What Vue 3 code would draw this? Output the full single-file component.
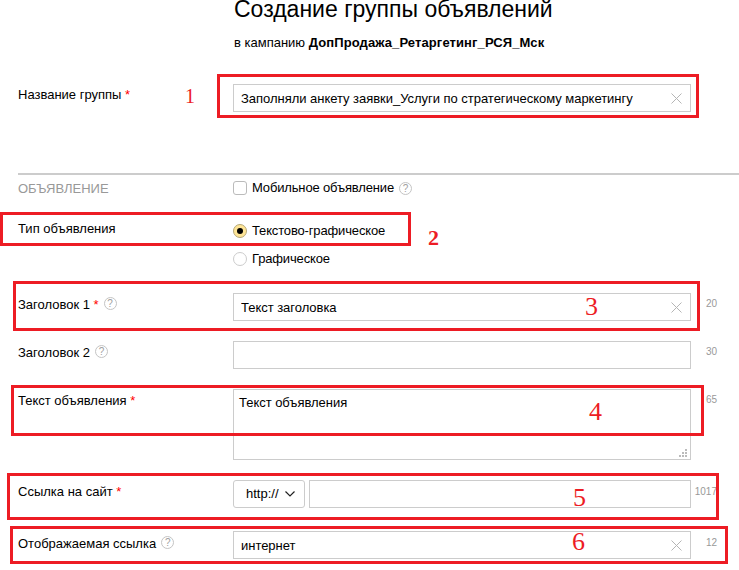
<template>
  <div class="page">
    <h1 class="title">Создание группы объявлений</h1>
    <p class="subtitle">в кампанию <b>ДопПродажа_Ретаргетинг_РСЯ_Мск</b></p>

    <div class="row row-name">
      <label class="label">Название группы <span class="req">*</span></label>
      <div class="field">
        <input class="input" value="Заполняли анкету заявки_Услуги по стратегическому маркетингу" readonly />
        <svg class="clear" viewBox="0 0 11 11"><path d="M0.5 0.5l10 10M10.5 0.5l-10 10" /></svg>
      </div>
    </div>

    <div class="divider"></div>

    <div class="row row-mobile">
      <div class="section">ОБЪЯВЛЕНИЕ</div>
      <div class="option">
        <span class="checkbox"></span>
        <span>Мобильное объявление</span>
        <span class="help">?</span>
      </div>
    </div>

    <div class="row row-type">
      <div class="label">Тип объявления</div>
      <div class="radios">
        <div class="option"><span class="radio checked"></span><span>Текстово-графическое</span></div>
        <div class="option"><span class="radio"></span><span>Графическое</span></div>
      </div>
    </div>

    <div class="row row-title1">
      <label class="label">Заголовок 1 <span class="req">*</span><span class="help">?</span></label>
      <div class="field">
        <input class="input" value="Текст заголовка" readonly />
        <svg class="clear" viewBox="0 0 11 11"><path d="M0.5 0.5l10 10M10.5 0.5l-10 10" /></svg>
      </div>
      <div class="counter">20</div>
    </div>

    <div class="row row-title2">
      <label class="label">Заголовок 2<span class="help">?</span></label>
      <div class="field"><input class="input" readonly /></div>
      <div class="counter">30</div>
    </div>

    <div class="row row-text">
      <label class="label">Текст объявления <span class="req">*</span></label>
      <div class="field">
        <textarea class="textarea" readonly>Текст объявления</textarea>
        <svg class="grip" viewBox="0 0 8 8">
          <rect x="6" y="0" width="2" height="2" />
          <rect x="3" y="3" width="2" height="2" />
          <rect x="6" y="3" width="2" height="2" />
          <rect x="0" y="6" width="2" height="2" />
          <rect x="3" y="6" width="2" height="2" />
          <rect x="6" y="6" width="2" height="2" />
        </svg>
      </div>
      <div class="counter">65</div>
    </div>

    <div class="row row-link">
      <label class="label">Ссылка на сайт <span class="req">*</span></label>
      <div class="link-field">
        <div class="select">
          <span>http://</span>
          <svg class="chevron" viewBox="0 0 10 6"><path d="M0.5 0.5l4.5 4.5 4.5-4.5" /></svg>
        </div>
        <input class="input" readonly />
      </div>
      <div class="counter">1017</div>
    </div>

    <div class="row row-display">
      <label class="label">Отображаемая ссылка<span class="help">?</span></label>
      <div class="field">
        <input class="input" value="интернет" readonly />
        <svg class="clear" viewBox="0 0 11 11"><path d="M0.5 0.5l10 10M10.5 0.5l-10 10" /></svg>
      </div>
      <div class="counter">12</div>
    </div>

    <div v-for="n in 6" :key="n" :class="['mark', 'mark-' + n]"></div>
    <span v-for="n in 6" :key="'d' + n" :class="['digit', 'digit-' + n]">{{ n }}</span>
  </div>
</template>

<script setup>
</script>

<style>
html, body {
  background: #fff;
  overflow: hidden;
}
</style>

<style scoped>
.page {
  position: relative;
  width: 739px;
  height: 570px;
  overflow: hidden;
  background: #fff;
  color: #000;
  font-family: "Liberation Sans", Arial, sans-serif;
  font-size: 13px;
  line-height: 16px;
}

.title {
  margin: 0 0 0 234px;
  font-size: 23px;
  line-height: 18px;
  font-weight: 400;
}

.subtitle {
  margin: 17px 0 0 234px;
  font-size: 13px;
}

.subtitle b {
  letter-spacing: 0.1px;
}

.row {
  display: grid;
  grid-template-columns: 215px 458px 26px;
  padding-left: 18px;
}

.row-name { margin-top: 33px; }
.row-mobile { margin-top: 5px; }
.row-type { margin-top: 27px; }
.row-title1 { margin-top: 26px; }
.row-title2 { margin-top: 20px; }
.row-text { margin-top: 20px; }
.row-link { margin-top: 20px; }
.row-display { margin-top: 23px; }

.divider {
  height: 2px;
  margin: 61px 0 0 18px;
  background: #ccc;
}

.label {
  display: flex;
  align-items: flex-start;
  padding-top: 4px;
  white-space: pre;
}

.row-name .label {
  padding-top: 3px;
}

.row-type .label {
  padding-top: 0;
  margin-top: -2px;
}

.row-display .label {
  padding-top: 5px;
}

.req {
  color: #f00;
}

.section {
  color: #999;
  padding-top: 1px;
  line-height: 15px;
}

.field {
  position: relative;
}

.input,
.textarea {
  display: block;
  box-sizing: border-box;
  width: 100%;
  margin: 0;
  border: 1px solid #ccc;
  border-radius: 0;
  outline: none;
  background: #fff;
  color: #000;
  font: inherit;
  letter-spacing: -0.03px;
}

.input {
  height: 28px;
  padding: 0 7px;
}

.textarea {
  height: 71px;
  padding: 5px 5px;
  resize: none;
}

.clear {
  position: absolute;
  top: 9px;
  right: 9px;
  width: 11px;
  height: 11px;
  fill: none;
  stroke: #b5b5b5;
}

.grip {
  position: absolute;
  right: 4px;
  bottom: 3px;
  width: 8px;
  height: 8px;
  fill: #bbb;
}

.counter {
  font-size: 10px;
  line-height: 12px;
  padding-top: 5px;
  color: #999;
  text-align: right;
  white-space: nowrap;
  grid-column: 3;
}

.row-link .counter,
.row-display .counter {
  padding-top: 6px;
}

.option {
  display: flex;
  align-items: center;
  gap: 5px;
  letter-spacing: -0.15px;
}

.radios {
  display: flex;
  flex-direction: column;
  gap: 12px;
}

.checkbox {
  box-sizing: border-box;
  width: 14px;
  height: 14px;
  border: 1px solid #bbb;
  border-radius: 3px;
  background: #fff;
}

.radio {
  box-sizing: border-box;
  width: 14px;
  height: 14px;
  border: 1px solid #ccc;
  border-radius: 50%;
  background: #fff;
}

.radio.checked {
  display: flex;
  align-items: center;
  justify-content: center;
  border-color: #b5a878;
  background: #ffe596;
}

.radio.checked::after {
  content: "";
  width: 6px;
  height: 6px;
  border-radius: 50%;
  background: #000;
}

.help {
  box-sizing: border-box;
  display: inline-flex;
  align-items: center;
  justify-content: center;
  flex: none;
  width: 13px;
  height: 13px;
  margin-left: 5px;
  border: 1px solid #c4c4c4;
  border-radius: 50%;
  color: #a0a0a0;
  font-size: 10px;
  line-height: 11px;
  letter-spacing: 0;
}

.option .help {
  margin-left: 0;
}

.link-field {
  display: flex;
  gap: 4px;
}

.select {
  box-sizing: border-box;
  flex: none;
  display: flex;
  align-items: center;
  justify-content: space-between;
  width: 72px;
  height: 28px;
  padding: 0 9px 0 12px;
  border: 1px solid #ccc;
  border-radius: 3px;
}

.chevron {
  width: 10px;
  height: 6px;
  fill: none;
  stroke: #222;
  stroke-width: 1.2;
}

/* red annotation frames painted over the form */
.mark {
  position: absolute;
  box-sizing: border-box;
  border: 3px solid #ed1c24;
}

.mark-1 { left: 217px; top: 74px; width: 482px; height: 44px; }
.mark-2 { left: 0; top: 212px; width: 411px; height: 34px; }
.mark-3 { left: 13px; top: 281px; width: 687px; height: 50px; }
.mark-4 { left: 11px; top: 385px; width: 693px; height: 51px; }
.mark-5 { left: 7px; top: 473px; width: 712px; height: 47px; }
.mark-6 { left: 10px; top: 526px; width: 718px; height: 38px; }

.digit {
  position: absolute;
  color: #ed1c24;
  font-family: "Liberation Serif", serif;
  font-size: 26px;
  line-height: 26px;
}

.digit-1 { left: 185px; top: 86px; font-size: 20px; line-height: 20px; }
.digit-2 { left: 428px; top: 227px; font-size: 22px; line-height: 22px; font-weight: 700; }
.digit-3 { left: 585px; top: 294px; }
.digit-4 { left: 589px; top: 399px; }
.digit-5 { left: 573px; top: 485px; }
.digit-6 { left: 572px; top: 529px; }
</style>
